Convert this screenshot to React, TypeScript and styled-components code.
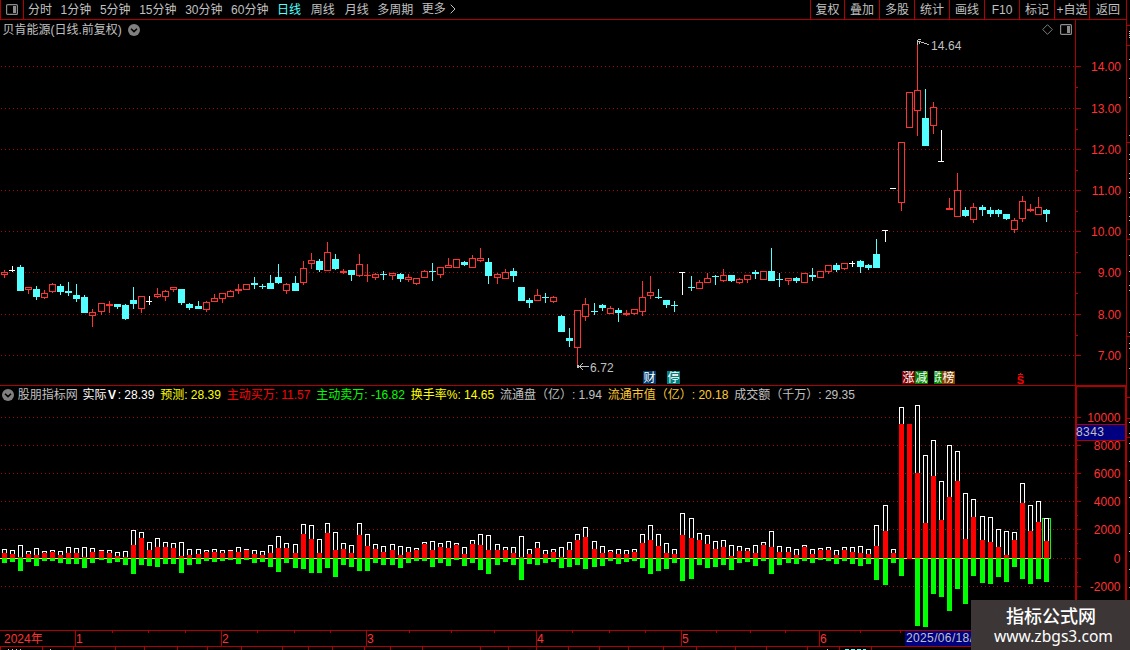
import React from 'react'
import styled, { createGlobalStyle } from 'styled-components';

const RED = '#b00000';
const UP = '#ff3232';
const DOWN = '#54ffff';
const GRAY = '#c0c0c0';
const FONT = '"Liberation Sans", "Noto Sans CJK SC", sans-serif';

const GlobalStyle = createGlobalStyle`
  body {
    margin: 0;
    background: #000;
    overflow: hidden;
  }
`;

const Screen = styled.div`
  position: relative;
  display: flex;
  flex-direction: column;
  width: 1130px;
  height: 650px;
  overflow: hidden;
  background: #000;
  color: ${GRAY};
  font: 12px/18px ${FONT};
  white-space: pre;

  svg { display: block; flex: none; }
`;

const Toolbar = styled.div`
  display: flex;
  box-sizing: border-box;
  width: 1127px;
  height: 20px;
  border: solid ${RED};
  border-width: 0 1px 1px;
  line-height: 20px;
`;

const PanelToggle = styled.div`
  display: flex;
  align-items: center;
  justify-content: center;
  box-sizing: border-box;
  width: 23px;
  border-right: 1px solid ${RED};
`;

const Periods = styled.div`
  display: flex;
  flex: 1;
  gap: 8.6px;
  padding-left: 4px;
`;

const Period = styled.span<{ $active?: boolean, $wide?: boolean }>`
  margin-left: ${p => p.$wide ? '1.2px' : 0};
  color: ${p => p.$active ? DOWN : GRAY};
`;

const Action = styled.div<{ $width?: number }>`
  display: flex;
  justify-content: center;
  box-sizing: border-box;
  width: ${p => p.$width || 35}px;
  border-left: 1px solid ${RED};
`;

const Body = styled.div`
  display: flex;
  flex: 1;
`;

const Main = styled.div`
  display: flex;
  flex-direction: column;
  width: 1127px;
`;

const PriceSection = styled.div`
  display: flex;
  height: 365px;
  border-bottom: 1px solid ${RED};
`;

const VolumeSection = styled.div`
  display: flex;
  height: 244px;
`;

const Pane = styled.div`
  display: flex;
  flex-direction: column;
  width: 1075px;
`;

const Title = styled.div`
  display: flex;
  align-items: center;
  gap: 6px;
  height: 19px;
  padding: 0 3px 0 2.5px;
`;

const Tools = styled.div`
  display: flex;
  gap: 7px;
  margin-left: auto;
`;

const Legend = styled.div`
  display: flex;
  align-items: center;
  gap: 5.8px;
  height: 17px;
  padding-left: 2px;
`;

const Value = styled.span<{ $color?: string }>`
  color: ${p => p.$color || GRAY};
`;

const Name = styled.span`
  margin: 0 -1px 0 -2px;
`;

const BoldV = styled.b`
  display: inline-block;
  width: 11px;
  text-align: center;
`;

const Watermark = styled.div`
  position: absolute;
  right: 0;
  bottom: 0;
  display: flex;
  flex-direction: column;
  align-items: center;
  box-sizing: border-box;
  width: 159px;
  height: 50px;
  padding-top: 3px;
  background: #3c3736;
  color: #fff;
`;

const SiteName = styled.div`
  padding-left: 1px;
  font: 500 18px/24px "Noto Sans CJK SC", sans-serif;
`;

const SiteUrl = styled.div`
  padding-left: 6px;
  font: 15.6px/18px "Noto Sans", sans-serif;
`;

// kind, high, body top, body bottom, low
type Candle = [string, number, number, number, number];

const candles: Candle[] = [
  ['r', 270, 272, 275, 278], ['w', 266, 270, 271, 272], ['c', 265, 267, 291, 291], ['r', 287, 287, 290, 294],
  ['c', 286, 289, 297, 300], ['r', 290, 293, 298, 299], ['r', 283, 284, 292, 293], ['c', 284, 286, 292, 295],
  ['c', 282, 291, 293, 296], ['c', 284, 295, 299, 302], ['c', 295, 297, 313, 313], ['r', 309, 312, 316, 327],
  ['r', 303, 303, 312, 315], ['r', 301, 304, 306, 313], ['c', 304, 304, 307, 309], ['c', 304, 305, 319, 320],
  ['c', 287, 300, 304, 309], ['r', 296, 296, 309, 313], ['w', 296, 301, 302, 305], ['r', 288, 294, 297, 298],
  ['r', 290, 291, 297, 301], ['r', 287, 287, 290, 292], ['c', 289, 289, 303, 305], ['c', 303, 304, 308, 310],
  ['c', 301, 306, 309, 309], ['r', 301, 302, 310, 312], ['r', 294, 298, 302, 302], ['r', 293, 293, 299, 303],
  ['r', 290, 291, 297, 297], ['r', 284, 289, 291, 294], ['r', 284, 284, 290, 290], ['c', 277, 283, 285, 289],
  ['c', 284, 286, 287, 289], ['c', 275, 283, 289, 289], ['c', 264, 277, 283, 284], ['r', 283, 284, 291, 294],
  ['c', 276, 283, 291, 291], ['r', 261, 268, 283, 285], ['r', 253, 260, 264, 269], ['c', 259, 261, 270, 272],
  ['r', 242, 252, 271, 271], ['c', 254, 259, 269, 270], ['r', 269, 271, 273, 274], ['c', 270, 270, 275, 281],
  ['r', 254, 264, 276, 277], ['r', 264, 275, 276, 282], ['r', 273, 274, 278, 280], ['c', 271, 274, 275, 280],
  ['r', 273, 273, 276, 280], ['c', 273, 274, 279, 282], ['r', 274, 277, 280, 282], ['r', 278, 278, 284, 285],
  ['r', 270, 271, 278, 278], ['c', 263, 271, 272, 281], ['r', 267, 267, 275, 278], ['r', 258, 265, 268, 268],
  ['r', 259, 259, 268, 268], ['c', 261, 262, 265, 266], ['r', 255, 258, 268, 268], ['r', 248, 258, 261, 262],
  ['c', 258, 262, 276, 284], ['r', 273, 274, 278, 284], ['r', 269, 272, 279, 279], ['c', 268, 271, 276, 282],
  ['c', 287, 287, 301, 301], ['c', 298, 300, 303, 308], ['r', 289, 295, 301, 301], ['c', 293, 297, 298, 303],
  ['r', 296, 297, 302, 303], ['c', 315, 316, 332, 332], ['c', 328, 338, 341, 347], ['r', 310, 310, 348, 366],
  ['r', 298, 304, 317, 321], ['c', 303, 311, 312, 315], ['c', 304, 305, 308, 311], ['r', 306, 308, 314, 314],
  ['c', 308, 310, 313, 322], ['r', 310, 313, 315, 316], ['r', 309, 309, 314, 315], ['r', 281, 297, 312, 316],
  ['r', 276, 292, 296, 299], ['c', 289, 297, 298, 299], ['c', 300, 300, 305, 308], ['c', 301, 305, 306, 312],
  ['w', 272, 272, 273, 295], ['c', 276, 287, 288, 291], ['r', 280, 282, 289, 289], ['r', 273, 278, 283, 283],
  ['c', 275, 276, 277, 285], ['r', 269, 275, 281, 282], ['c', 275, 275, 281, 282], ['r', 278, 279, 283, 284],
  ['r', 275, 275, 280, 283], ['c', 270, 272, 274, 279], ['r', 271, 271, 280, 280], ['c', 248, 271, 281, 281],
  ['c', 273, 279, 280, 287], ['r', 278, 278, 281, 285], ['c', 277, 278, 281, 283], ['r', 273, 273, 283, 283],
  ['c', 268, 275, 277, 281], ['r', 271, 271, 278, 278], ['r', 265, 265, 272, 274], ['c', 263, 265, 270, 272],
  ['r', 263, 263, 269, 270], ['w', 261, 263, 264, 267], ['c', 260, 261, 267, 273], ['c', 264, 265, 268, 270],
  ['c', 239, 254, 268, 268], ['w', 230, 230, 231, 242], ['w', 188, 188, 189, 189], ['r', 142, 142, 203, 211],
  ['r', 92, 92, 128, 128], ['r', 42, 90, 111, 136], ['c', 89, 118, 146, 146], ['r', 102, 107, 126, 134],
  ['w', 130, 161, 162, 162], ['r', 198, 208, 210, 210], ['r', 173, 190, 217, 217], ['c', 207, 210, 216, 217],
  ['r', 203, 207, 220, 223], ['c', 205, 207, 210, 216], ['c', 207, 210, 214, 217], ['c', 209, 210, 214, 217],
  ['c', 214, 214, 219, 220], ['r', 218, 220, 230, 233], ['r', 196, 201, 219, 222], ['r', 204, 209, 211, 212],
  ['r', 197, 207, 215, 215], ['c', 209, 210, 214, 222],
];

// total top, buy top, sell bottom
const volumes: [number, number, number][] = [
  [549, 553, 563], [550, 554, 562], [545, 557, 571], [551, 554, 562], [548, 555, 566], [551, 553, 561],
  [550, 552, 561], [551, 555, 563], [547, 553, 564], [548, 553, 564], [547, 557, 568], [548, 552, 563],
  [550, 551, 560], [550, 553, 563], [552, 556, 562], [551, 557, 565], [530, 545, 574], [532, 538, 565],
  [542, 550, 566], [538, 547, 567], [542, 547, 564], [543, 548, 564], [542, 556, 573], [549, 555, 565],
  [549, 554, 564], [550, 552, 561], [549, 552, 562], [550, 553, 561], [550, 551, 560], [547, 552, 564],
  [549, 550, 560], [550, 554, 563], [551, 555, 562], [545, 553, 567], [536, 548, 572], [543, 548, 563],
  [544, 553, 568], [524, 534, 569], [525, 539, 573], [539, 553, 573], [523, 533, 568], [532, 550, 577],
  [543, 549, 565], [545, 553, 567], [523, 535, 571], [534, 546, 571], [544, 549, 563], [546, 552, 565],
  [544, 550, 565], [546, 555, 568], [547, 552, 563], [548, 550, 561], [542, 544, 561], [541, 550, 567],
  [543, 547, 563], [541, 548, 566], [543, 545, 560], [547, 554, 566], [540, 544, 563], [534, 545, 570],
  [535, 550, 574], [544, 550, 565], [547, 550, 562], [547, 553, 565], [536, 557, 580], [549, 554, 564],
  [542, 548, 565], [550, 554, 563], [549, 552, 562], [547, 557, 568], [542, 550, 567], [534, 540, 565],
  [527, 537, 569], [541, 549, 567], [546, 553, 566], [550, 552, 561], [549, 554, 564], [550, 554, 562],
  [549, 552, 561], [534, 543, 568], [525, 540, 574], [534, 546, 571], [543, 553, 569], [549, 554, 563],
  [513, 535, 581], [518, 538, 579], [533, 540, 565], [535, 544, 568], [541, 549, 567], [540, 547, 565],
  [545, 556, 570], [546, 551, 563], [548, 551, 562], [545, 553, 566], [542, 545, 561], [531, 547, 574],
  [546, 552, 565], [547, 552, 563], [549, 555, 564], [545, 547, 561], [549, 554, 563], [548, 550, 560],
  [547, 550, 561], [550, 555, 564], [547, 550, 561], [547, 552, 564], [546, 553, 566], [549, 554, 564],
  [525, 546, 580], [505, 531, 585], [549, 553, 563], [407, 424, 576], [424, 424, 558], [405, 473, 626],
  [455, 523, 627], [440, 476, 594], [481, 520, 597], [445, 497, 611], [451, 481, 589], [493, 539, 604],
  [499, 517, 576], [516, 540, 583], [517, 542, 584], [529, 547, 577], [531, 555, 582], [532, 540, 567],
  [483, 503, 579], [505, 531, 584], [501, 522, 579], [518, 541, 582],
];

const barLeft = (i: number) => Math.floor(2.045 + 8.0825 * i);

const priceGrid = [66, 108, 149, 190, 231, 272, 314, 355];
const volumeGrid = [417, 445, 473, 501, 529, 558, 586];
const volumeLabels = ['10000', '8000', '6000', '4000', '2000', '0', '-2000'];

const months: [number, string][] = [[75, '1'], [221, '2'], [366, '3'], [536, '4'], [681, '5'], [819, '6']];
const weekTicks = [112, 148, 185, 257, 294, 330, 409, 451, 494, 572, 609, 645, 716, 750, 785, 860, 900];
const tabTicks = [
  0, 42, 73, 115, 144, 177, 207, 241, 282, 308, 332, 364, 390, 422, 480, 508, 536, 568, 599, 628, 663, 696, 735, 766,
  807, 839, 871,
];

const sideTicks = [25, 45, 142, 239, 336, 397, 418, 437];
const sideMarks = [
  31, 33, 35, 37, 59, 78, 97, 135, 154, 159, 173, 178, 192, 197, 216, 220, 234, 255, 271, 285, 290, 332, 343, 348,
  368, 422, 433, 443, 461, 480, 497, 533, 551, 569, 587,
];

// x, width, label, color
const badges: [number, number, string, string][] = [
  [643, 13, '财', '#003c6e'], [667, 13, '停', '#008080'], [902, 13, '涨', '#800000'], [915, 13, '减', '#008000'],
  [934, 8, '跌', '#008000'], [942, 13, '榜', '#804000'],
];

const GridLine = ({ y, from = 1 }: { y: number, from?: number }) => (
  <path d={`M${from} ${y + .5}H1075`} stroke="#a00c0c" strokeDasharray="1 3" />
)

const CandleBar = ({ data, x }: { data: Candle, x: number }) => {
  const [kind, high, top, bottom, low] = data
  const color = kind === 'r' ? UP : kind === 'c' ? DOWN : '#fff'
  return (
    <g fill={color}>
      <rect x={x + 2} y={high} width={1} height={top - high} />
      <rect x={x + 2} y={bottom} width={1} height={low - bottom} />
      <rect x={x - 1} y={top} width={kind === 'w' ? 6 : 7} height={bottom - top} />
      {kind === 'r' && bottom - top > 2 &&
        <rect x={x} y={top + 1} width={5} height={bottom - top - 2} fill="#000" />}
    </g>
  )
}

const PriceChart = () => (
  <svg width="1075" height="346" viewBox="0 39 1075 346" shapeRendering="crispEdges">
    {priceGrid.map(y => <GridLine key={y} y={y} />)}
    {candles.map((c, i) => <CandleBar key={i} data={c} x={barLeft(i)} />)}
    <g stroke={GRAY} fill="none">
      <path d="M918 41.5H921M921 42.5H924M924 43.5H927M927 44.5H929M917.5 40V45M918 39.5H921M919.5 42V44" />
      <path d="M578 366.5H589M580.5 365V368M581.5 364V365M581.5 368V369M582.5 363V364M582.5 369V370" />
    </g>
    <rect x="577" y="365" width="2" height="3" fill={GRAY} />
    <g fill={GRAY} fontFamily={FONT} fontSize="12" letterSpacing=".1">
      <text x="931" y="50">14.64</text>
      <text x="590" y="372">6.72</text>
    </g>
    {badges.map(([x, width, label, color]) => (
      <g key={x} transform={`translate(${x} 371)`}>
        <rect width={width} height="13" fill={color} />
        <text
          x=".5"
          y="11"
          transform={`scale(${width / 13} 1)`}
          fontSize="12"
          fontFamily={FONT}
          fill="#fff"
        >
          {label}
        </text>
      </g>
    ))}
    <path d="M1020 373H1021V374H1023V375H1018V374H1020Z" fill="#f00" />
    <text x="1016.8" y="384" fontSize="11" fontWeight="bold" fontFamily={FONT} fill="#f00">S</text>
  </svg>
)

const PriceAxis = () => (
  <svg width="52" height="365" viewBox="1075 20 52 365" shapeRendering="crispEdges">
    <path d="M1075.5 20V385M1126.5 20V385" stroke={RED} />
    {priceGrid.map((y, i) => (
      <g key={y}>
        <rect x="1076" y={y} width="5" height="1" fill={RED} />
        {i < 7 && <rect x="1076" y={y + 21} width="2" height="1" fill={RED} />}
        <text x="1121" y={y + 5} textAnchor="end" fontSize="12" fontFamily={FONT} fill={UP}>
          {`${14 - i}.00`}
        </text>
      </g>
    ))}
  </svg>
)

const VolumeChart = () => (
  <svg width="1075" height="227" viewBox="0 403 1075 227" shapeRendering="crispEdges">
    {volumeGrid.map(y => <GridLine key={y} y={y} from={y === 558 ? 1053 : 1} />)}
    <rect x="0" y="558" width="1051" height="1" fill="#ff0" />
    {volumes.map(([total, buy, sell], i) => {
      const x = barLeft(i)
      return (
        <g key={i}>
          {total < buy && <rect x={x} y={total} width="5" height={558 - total} fill="#fff" />}
          {total < buy && <rect x={x + 1} y={total + 1} width="3" height={557 - total} fill="#000" />}
          <rect x={x} y={buy} width="5" height={(total === buy ? 559 : 558) - buy} fill="#f00" />
          <rect x={x} y="558" width="5" height={sell - 558} fill="#0f0" />
        </g>
      )
    })}
    <path d="M1044 518.5H1042.5V558.5M1049 518.5H1050.5V558.5" stroke="#0f0" fill="none" />
  </svg>
)

const VolumeAxis = () => (
  <svg width="52" height="244" viewBox="1075 386 52 244" shapeRendering="crispEdges">
    <path d="M1076 386V630M1126 386V630" stroke={RED} strokeWidth="2" />
    <rect x="1075" y="386" width="52" height="1" fill={RED} />
    {volumeGrid.map((y, i) => (
      <g key={y}>
        <rect x="1077" y={y} width="4" height="1" fill={RED} />
        <rect x="1077" y={y + 14} width="1" height="1" fill={RED} />
        <text x="1120.5" y={y + 5} textAnchor="end" fontSize="12" fontFamily={FONT} fill={UP}>
          {volumeLabels[i]}
        </text>
      </g>
    ))}
    <rect x="1077" y="424" width="48" height="17" fill={RED} />
    <rect x="1077" y="425" width="48" height="15" fill="#000080" />
    <text x="1076" y="436" fontSize="12" letterSpacing=".4" fontFamily={FONT} fill={GRAY}>8343</text>
  </svg>
)

const TimeAxis = () => (
  <svg width="1127" height="20" viewBox="0 630 1127 20" shapeRendering="crispEdges">
    <path d="M0 630.5H1127M0 646.5H1127" stroke={RED} />
    {weekTicks.map(x => <rect key={x} x={x} y="631" width="1" height="2" fill={RED} />)}
    {tabTicks.map(x => <rect key={x} x={x} y="647" width="1" height="3" fill={RED} />)}
    <g fontSize="12" fontFamily={FONT} fill={UP}>
      <text x="4" y="643">2024年</text>
      {months.map(([x, label]) => (
        <g key={x}>
          <rect x={x} y="631" width="1" height="15" fill={RED} />
          <text x={x + 1} y="643">{label}</text>
        </g>
      ))}
    </g>
    <rect x="905" y="631" width="100" height="15" fill="#000080" />
    <text x="906" y="642" fontSize="12" letterSpacing=".36" fontFamily={FONT} fill={GRAY}>2025/06/18/</text>
    <path d="M8 649.5H22M50 649.5H52M827 649.5H830" stroke={GRAY} strokeDasharray="1 3" />
    <path d="M845 649.5H866" stroke={DOWN} strokeDasharray="4 2" />
  </svg>
)

const SideStrip = () => (
  <svg width="3" height="630" viewBox="1127 20 3 630" shapeRendering="crispEdges">
    {sideTicks.map(y => <rect key={y} x="1127" y={y} width="3" height="1" fill={RED} />)}
    {sideMarks.map(y => <rect key={y} x="1129" y={y} width="1" height="1" fill={GRAY} />)}
  </svg>
)

const PanelIcon = () => (
  <svg width="12" height="11" viewBox="0 0 12 11">
    <rect x=".6" y=".6" width="10.8" height="9.8" rx="1" fill="none" stroke="#8c8c8c" strokeWidth="1.2" />
    <rect x="7" y="2" width="3" height="7" fill="#8c8c8c" />
  </svg>
)

const DiamondIcon = () => (
  <svg width="11" height="11" viewBox="0 0 11 11">
    <path d="M5.5.7L10.3 5.5L5.5 10.3L.7 5.5Z" fill="none" stroke="#8c8c8c" strokeWidth=".9" />
  </svg>
)

const DropIcon = () => (
  <svg width="12" height="12" viewBox="0 0 12 12">
    <circle cx="6" cy="6" r="6" fill="#808080" />
    <path d="M3 4.8L6 7.6L9 4.8" fill="none" stroke="#000" strokeWidth="1.5" />
  </svg>
)

const MoreIcon = () => (
  <svg width="6" height="10" viewBox="0 0 6 10">
    <path d="M.7.7L5 5L.7 9.3" fill="none" stroke={GRAY} />
  </svg>
)

const More = styled.span`
  display: flex;
  align-items: center;
  gap: 4px;
  height: 18px;
`;

const periods = ['分时', '1分钟', '5分钟', '15分钟', '30分钟', '60分钟', '日线', '周线', '月线', '多周期'];
const actions = ['复权', '叠加', '多股', '统计', '画线', 'F10', '标记', '+自选', '返回'];

const App = () => {
  return (
    <Screen>
      <GlobalStyle />
      <Toolbar>
        <PanelToggle><PanelIcon /></PanelToggle>
        <Periods>
          {periods.map(p => (
            <Period key={p} $active={p === '日线'} $wide={p === '周线' || p === '月线'}>{p}</Period>
          ))}
          <More>更多<MoreIcon /></More>
        </Periods>
        {actions.map(a => (
          <Action key={a} $width={a === '复权' ? 34 : a === '返回' ? 37 : 35}>{a}</Action>
        ))}
      </Toolbar>
      <Body>
        <Main>
          <PriceSection>
            <Pane>
              <Title>
                贝肯能源(日线.前复权)
                <DropIcon />
                <Tools>
                  <DiamondIcon />
                  <PanelIcon />
                </Tools>
              </Title>
              <PriceChart />
            </Pane>
            <PriceAxis />
          </PriceSection>
          <VolumeSection>
            <Pane>
              <Legend>
                <DropIcon />
                <Name>股朋指标网</Name>
                <Value $color="#fff">实际<BoldV>V</BoldV>: 28.39</Value>
                <Value $color="#ff0">预测: 28.39</Value>
                <Value $color="#f00">主动买万: 11.57</Value>
                <Value $color="#0f0">主动卖万: -16.82</Value>
                <Value $color="#ff0">换手率%: 14.65</Value>
                <Value>流通盘（亿）: 1.94</Value>
                <Value $color="#ffc832">流通市值（亿）: 20.18</Value>
                <Value>成交额（千万）: 29.35</Value>
              </Legend>
              <VolumeChart />
            </Pane>
            <VolumeAxis />
          </VolumeSection>
          <TimeAxis />
        </Main>
        <SideStrip />
      </Body>
      <Watermark>
        <SiteName>指标公式网</SiteName>
        <SiteUrl>www.zbgs3.com</SiteUrl>
      </Watermark>
    </Screen>
  )
}
export default App
